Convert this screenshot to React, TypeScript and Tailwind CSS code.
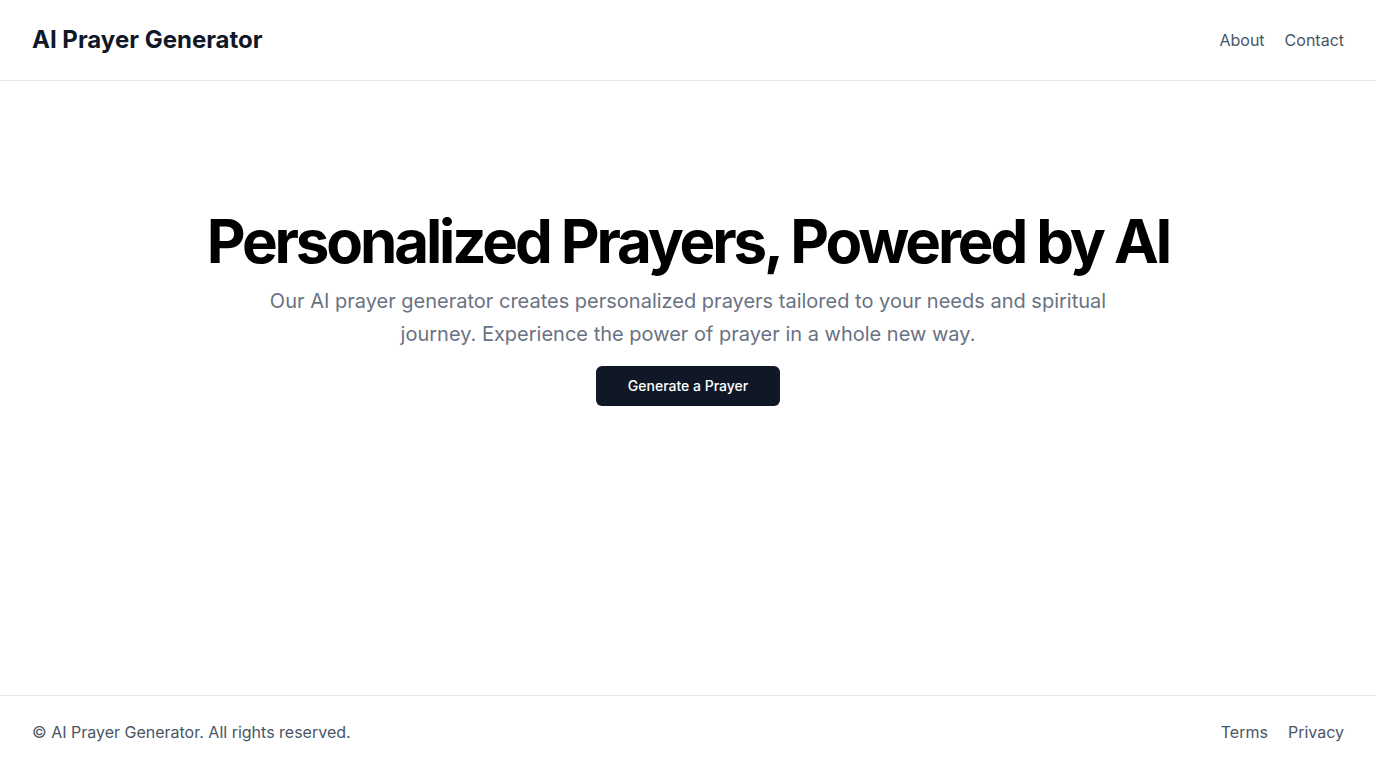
import React from 'react';

const navLinks = ['About', 'Contact'];
const footerLinks = ['Terms', 'Privacy'];

const App: React.FC = () => {
  return (
    <div className="min-h-screen flex flex-col bg-white text-gray-900 font-['Inter',sans-serif]">
      {/* Header */}
      <header className="h-[81px] shrink-0 flex items-center justify-between px-8 border-b border-gray-200">
        <a href="#" className="text-2xl font-bold text-gray-900">
          AI Prayer Generator
        </a>
        <nav className="flex items-center gap-5">
          {navLinks.map((link) => (
            <a key={link} href="#" className="text-base text-gray-600 hover:text-gray-900">
              {link}
            </a>
          ))}
        </nav>
      </header>

      {/* Hero */}
      <main className="flex-1">
        <section className="pt-[130px] px-4 flex flex-col items-center text-center">
          <h1 className="text-6xl font-bold tracking-[-0.052em] text-black">
            Personalized Prayers, Powered by AI
          </h1>
          <p className="mt-[14px] max-w-[900px] text-xl leading-relaxed text-gray-500">
            Our AI prayer generator creates personalized prayers tailored to your needs and spiritual journey.
            Experience the power of prayer in a whole new way.
          </p>
          <button className="mt-4 h-10 px-8 rounded-md bg-gray-900 text-white text-sm font-medium hover:bg-gray-800">
            Generate a Prayer
          </button>
        </section>
      </main>

      {/* Footer */}
      <footer className="h-[73px] shrink-0 flex items-center justify-between px-8 border-t border-gray-200">
        <p className="text-base text-gray-600">© AI Prayer Generator. All rights reserved.</p>
        <nav className="flex items-center gap-5">
          {footerLinks.map((link) => (
            <a key={link} href="#" className="text-base text-gray-600 hover:text-gray-900">
              {link}
            </a>
          ))}
        </nav>
      </footer>
    </div>
  );
};

export default App;
